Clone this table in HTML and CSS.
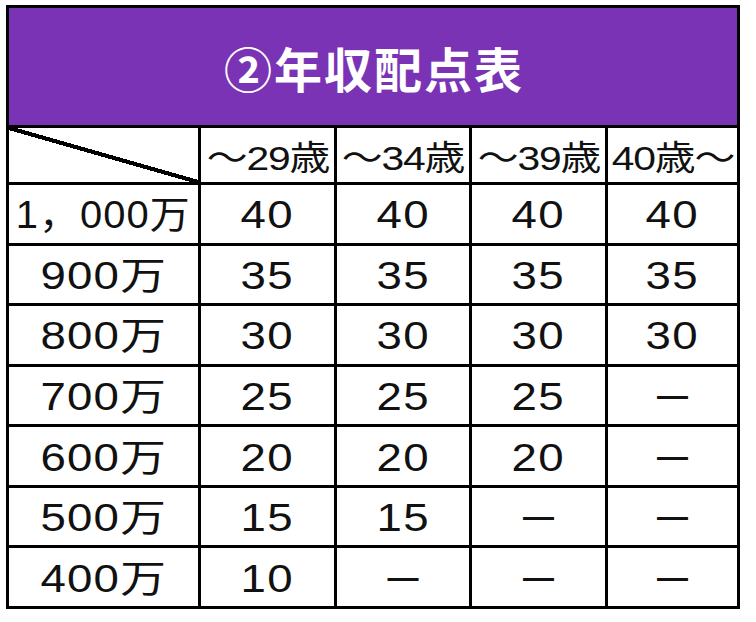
FILE: index.html
```html
<!DOCTYPE html>
<html lang="ja">
<head>
<meta charset="utf-8">
<title>②年収配点表</title>
<link rel="stylesheet" href="styles.css">
</head>
<body>
<div class="table">
  <div class="title">②年収配点表</div>

  <div class="cell corner"></div>
  <div class="cell head"><span class="t">～29歳</span></div>
  <div class="cell head"><span class="t">～34歳</span></div>
  <div class="cell head"><span class="t">～39歳</span></div>
  <div class="cell head"><span class="t">40歳～</span></div>

  <div class="cell label"><span class="t wide">1，000万</span></div>
  <div class="cell num"><span class="t">40</span></div>
  <div class="cell num"><span class="t">40</span></div>
  <div class="cell num"><span class="t">40</span></div>
  <div class="cell num"><span class="t">40</span></div>

  <div class="cell label"><span class="t">900万</span></div>
  <div class="cell num"><span class="t">35</span></div>
  <div class="cell num"><span class="t">35</span></div>
  <div class="cell num"><span class="t">35</span></div>
  <div class="cell num"><span class="t">35</span></div>

  <div class="cell label"><span class="t">800万</span></div>
  <div class="cell num"><span class="t">30</span></div>
  <div class="cell num"><span class="t">30</span></div>
  <div class="cell num"><span class="t">30</span></div>
  <div class="cell num"><span class="t">30</span></div>

  <div class="cell label"><span class="t">700万</span></div>
  <div class="cell num"><span class="t">25</span></div>
  <div class="cell num"><span class="t">25</span></div>
  <div class="cell num"><span class="t">25</span></div>
  <div class="cell dash">—</div>

  <div class="cell label"><span class="t">600万</span></div>
  <div class="cell num"><span class="t">20</span></div>
  <div class="cell num"><span class="t">20</span></div>
  <div class="cell num"><span class="t">20</span></div>
  <div class="cell dash">—</div>

  <div class="cell label"><span class="t">500万</span></div>
  <div class="cell num"><span class="t">15</span></div>
  <div class="cell num"><span class="t">15</span></div>
  <div class="cell dash">—</div>
  <div class="cell dash">—</div>

  <div class="cell label"><span class="t">400万</span></div>
  <div class="cell num"><span class="t">10</span></div>
  <div class="cell dash">—</div>
  <div class="cell dash">—</div>
  <div class="cell dash">—</div>
</div>
</body>
</html>
```
FILE: styles.css
```css
html, body {
  margin: 0;
  padding: 0;
  background: #ffffff;
}

body {
  padding: 5px 0 0 6px;
  font-family: "Liberation Sans", "Noto Sans CJK JP", sans-serif;
  color: #111111;
}

.table {
  width: 734px;
  height: 604px;
  box-sizing: border-box;
  background: #000000;
  padding: 3px;
  display: grid;
  grid-template-columns: 189px 133px 132px 133px 129px;
  grid-template-rows: 117px 54px repeat(7, minmax(0, 1fr));
  gap: 3px;
}

.title {
  grid-column: 1 / -1;
  background: #7a33b5;
  color: #ffffff;
  font-family: "Noto Sans CJK JP", sans-serif;
  font-weight: 700;
  font-size: 48px;
  letter-spacing: 2px;
  line-height: 1;
  display: flex;
  align-items: center;
  justify-content: center;
  padding-left: 2px;
}

.cell {
  background: #ffffff;
  display: flex;
  align-items: center;
  justify-content: center;
  white-space: nowrap;
  box-sizing: border-box;
  line-height: 1;
  min-height: 0;
  overflow: hidden;
}

.t {
  display: inline-block;
  transform: scaleX(1.2);
}

.t.wide {
  transform: scaleX(1.05);
}

.corner {
  background:
    linear-gradient(to top right,
      #ffffff calc(50% - 2px),
      #000000 calc(50% - 2px),
      #000000 calc(50% + 2px),
      #ffffff calc(50% + 2px));
}

.head {
  font-size: 34px;
  letter-spacing: -1px;
  padding-top: 6px;
}

.label,
.num {
  font-size: 38px;
  letter-spacing: 1px;
  padding-top: 3px;
}

.dash {
  font-size: 31px;
  font-weight: 700;
}
```
